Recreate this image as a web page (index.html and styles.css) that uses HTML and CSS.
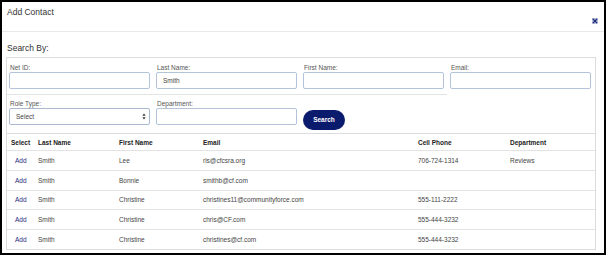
FILE: index.html
```html
<!DOCTYPE html>
<html>
<head>
<meta charset="utf-8">
<link rel="stylesheet" href="styles.css">
</head>
<body>
<div class="modal">
  <div class="modal-header">
    <div class="title">Add Contact</div>
    <svg class="close" width="6" height="6" viewBox="0 0 6 6"><path d="M1 1L5 5M5 1L1 5" stroke="#1b2a7a" stroke-width="1.6"/><rect x="0.5" y="0.5" width="5" height="5" fill="none" stroke="#1b2a7a" stroke-width="0.6" opacity="0.5"/></svg>
  </div>
  <div class="search-by">Search By:</div>
  <div class="panel">
    <div class="fields row1">
      <div class="field"><label>Net ID:</label><div class="input"></div></div>
      <div class="field"><label>Last Name:</label><div class="input">Smith</div></div>
      <div class="field"><label>First Name:</label><div class="input"></div></div>
      <div class="field"><label>Email:</label><div class="input"></div></div>
    </div>
    <div class="fields row2">
      <div class="field"><label>Role Type:</label><div class="input select">Select<svg class="arrows" width="4" height="7" viewBox="0 0 4 7"><path d="M2 0.5L3.6 2.8H0.4Z M2 6.5L3.6 4.2H0.4Z" fill="#333"/></svg></div></div>
      <div class="field"><label>Department:</label><div class="input"></div></div>
      <div class="field"><label>&nbsp;</label><div class="btn-wrap"><button class="search-btn">Search</button></div></div>
    </div>
    <table class="results">
      <colgroup>
        <col class="c1"><col class="c2"><col class="c3"><col class="c4"><col class="c5"><col class="c6">
      </colgroup>
      <thead>
        <tr><th>Select</th><th>Last Name</th><th>First Name</th><th>Email</th><th>Cell Phone</th><th>Department</th></tr>
      </thead>
      <tbody>
        <tr><td class="add">Add</td><td>Smith</td><td>Lee</td><td>rls@cfcsra.org</td><td>706-724-1314</td><td>Reviews</td></tr>
        <tr><td class="add">Add</td><td>Smith</td><td>Bonnie</td><td>smithb@cf.com</td><td></td><td></td></tr>
        <tr><td class="add">Add</td><td>Smith</td><td>Christine</td><td>christines11@communityforce.com</td><td>555-111-2222</td><td></td></tr>
        <tr><td class="add">Add</td><td>Smith</td><td>Christine</td><td>chris@CF.com</td><td>555-444-3232</td><td></td></tr>
        <tr><td class="add">Add</td><td>Smith</td><td>Christine</td><td>christines@cf.com</td><td>555-444-3232</td><td></td></tr>
      </tbody>
    </table>
  </div>
</div>
</body>
</html>
```
FILE: styles.css
```css
* { box-sizing: border-box; }
html, body { margin: 0; padding: 0; background: #fff; }
body { font-family: "Liberation Sans", Arial, sans-serif; color: #444; }

.modal {
  width: 606px;
  height: 255px;
  border: 2px solid #000;
  background: #fff;
}

.modal-header {
  height: 30px;
  border-bottom: 1px solid #e8e8e8;
  display: flex;
  justify-content: space-between;
  align-items: flex-start;
  padding: 0 6px 0 5px;
}
.title {
  font-size: 8.5px;
  line-height: 11px;
  padding-top: 5px;
  color: #333;
}
.close { margin-top: 16px; }

.search-by {
  font-size: 8.5px;
  line-height: 12px;
  padding: 10px 0 0 5px;
  color: #333;
  height: 25px;
}

.panel {
  margin: 0 8px 0 4px;
  border: 1px solid #dcdcdc;
}

.fields {
  display: grid;
  grid-template-columns: repeat(4, 141px);
  column-gap: 6px;
  padding: 0 2px;
}
.row1 { padding-top: 5px; padding-bottom: 5px; }
.row2 {
  grid-template-columns: repeat(3, 141px);
  width: 440px;
  border-top: 1px solid #e3e3e3;
  padding-top: 4px;
  padding-bottom: 5px;
}

.field { display: flex; flex-direction: column; }
.field label {
  font-size: 6.5px;
  line-height: 9px;
  height: 9px;
  padding-left: 1px;
  color: #555;
}
.input {
  height: 17px;
  border: 1px solid #b3c4da;
  border-radius: 2px;
  font-size: 6.5px;
  line-height: 15px;
  padding-left: 6px;
  color: #444;
  background: #fff;
}
.select {
  display: flex;
  justify-content: space-between;
  align-items: center;
  padding-right: 3px;
  border-color: #a9bad0;
}
.btn-wrap { height: 20px; }
.search-btn {
  width: 42px;
  height: 20px;
  border: none;
  border-radius: 10px;
  background: #0a1a6c;
  color: #fff;
  font-family: "Liberation Sans", Arial, sans-serif;
  font-weight: bold;
  font-size: 6.5px;
  padding: 0;
}

.results {
  width: 100%;
  border-collapse: collapse;
  table-layout: fixed;
  border-top: 1px solid #dcdcdc;
}
.c1 { width: 27px; }
.c2 { width: 81px; }
.c3 { width: 84px; }
.c4 { width: 215px; }
.c5 { width: 92px; }
.c6 { width: auto; }
.results th, .results td {
  text-align: left;
  font-size: 6.5px;
  padding: 0 0 0 4px;
  white-space: nowrap;
  overflow: visible;
}
.results th {
  height: 17px;
  font-weight: bold;
  color: #222;
  border-bottom: 1px solid #e3e3e3;
}
.results td {
  height: 19.8px;
  color: #444;
  border-bottom: 1px solid #e3e3e3;
}
.results tbody tr:last-child td { border-bottom: none; }
.results td.add {
  color: #1f2a80;
  padding-left: 8px;
}
```
